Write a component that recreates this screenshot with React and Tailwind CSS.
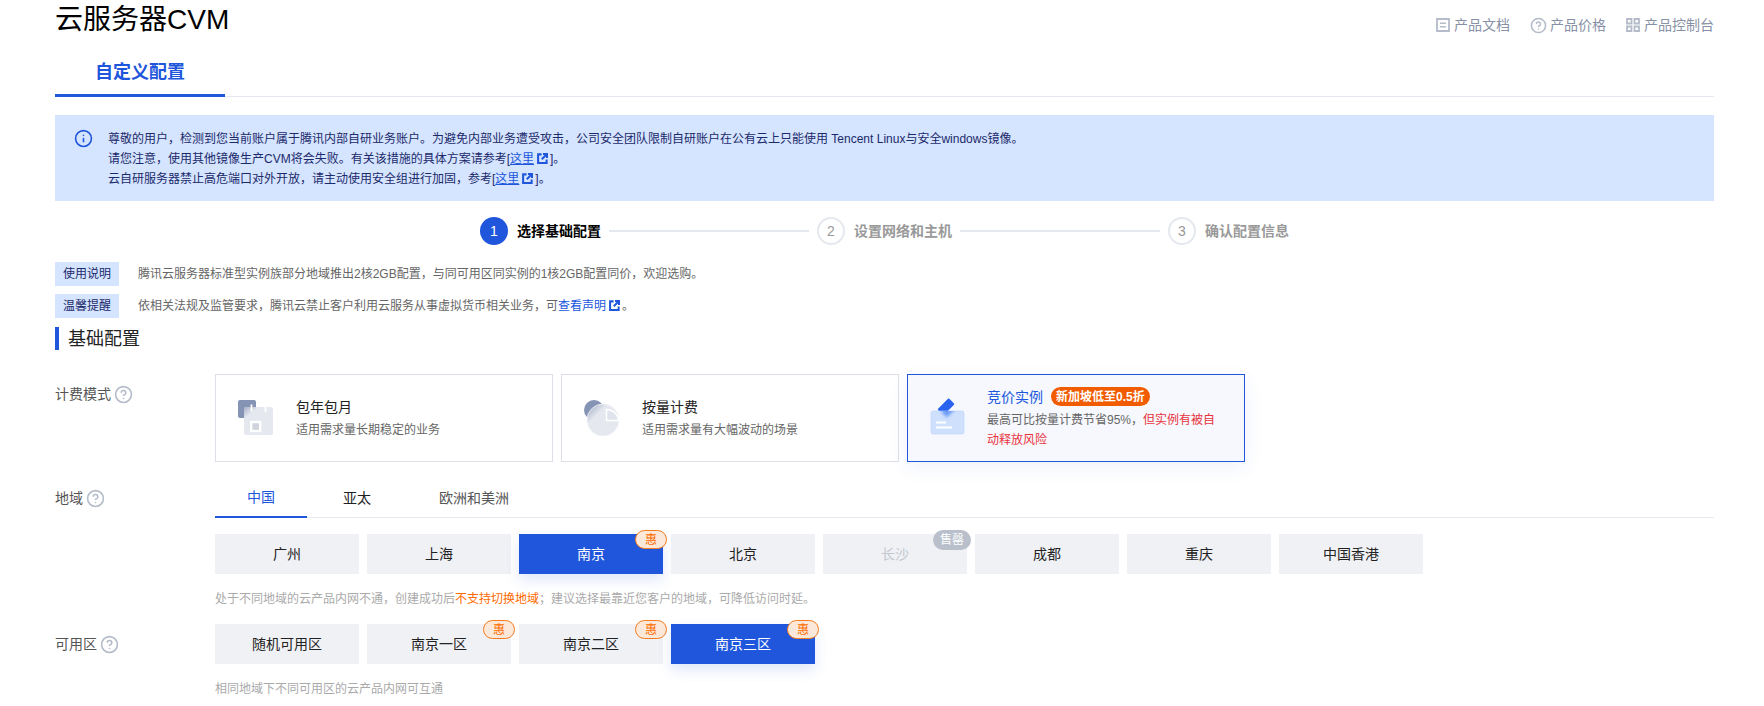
import React from 'react';
import { CircleHelp, Info } from 'lucide-react';

const FONT = 'font-["Liberation_Sans","Noto_Sans_CJK_SC",sans-serif]';

const ExternalIcon = () => (
  <svg viewBox="0 0 12 12" className="inline-block w-[11px] h-[11px] ml-[3px] mr-[2px] align-[-1px]">
    <path d="M5 1.5H1.2v9.3h9.3V7" fill="none" stroke="#2056dc" strokeWidth="2.2" />
    <path d="M6.5 1.1h4.4v4.4M10.6 1.4L5.2 6.8" fill="none" stroke="#2056dc" strokeWidth="2.2" />
  </svg>
);

const DocIcon = () => (
  <svg viewBox="0 0 14 14" className="w-[14px] h-[14px]">
    <path d="M1 1h12v12H1z" fill="none" stroke="#b4bbc9" strokeWidth="1.8" />
    <path d="M4 5.2h6M4 8.8h6" stroke="#b4bbc9" strokeWidth="1.6" />
  </svg>
);

const GridIcon = () => (
  <svg viewBox="0 0 14 14" className="w-[14px] h-[14px]">
    <path d="M1 1h4.5v4.5H1zM8.5 1H13v4.5H8.5zM1 8.5h4.5V13H1zM8.5 8.5H13V13H8.5z" fill="none" stroke="#b4bbc9" strokeWidth="1.8" />
  </svg>
);

const MonthlyIcon = () => (
  <svg viewBox="0 0 36 36" className="w-9 h-9 shrink-0">
    <defs>
      <linearGradient id="m1" x1="0.1" y1="0" x2="0.6" y2="0.6">
        <stop offset="0" stopColor="#aab3c9" />
        <stop offset="1" stopColor="#e5e8ef" />
      </linearGradient>
    </defs>
    <rect x="0" y="0" width="18" height="18" rx="2" fill="#8593b5" />
    <rect x="6" y="7" width="29" height="28" rx="2" fill="#e5e8ef" />
    <path d="M8 7h10v11H6V9a2 2 0 0 1 2-2z" fill="url(#m1)" />
    <path d="M13.5 4.5v7M27.5 7v5" stroke="#fff" strokeWidth="1.8" />
    <rect x="13.2" y="22" width="9" height="9" fill="#cfd4df" stroke="#fff" strokeWidth="2.4" />
  </svg>
);

const UsageIcon = () => (
  <svg viewBox="0 0 36 36" className="w-9 h-9 shrink-0">
    <defs>
      <linearGradient id="u1" x1="0" y1="0" x2="0.55" y2="0.55">
        <stop offset="0.1" stopColor="#a5aec6" />
        <stop offset="0.6" stopColor="#e5e8ef" />
      </linearGradient>
    </defs>
    <circle cx="10" cy="10" r="10" fill="#8593b5" />
    <circle cx="19" cy="20" r="16" fill="url(#u1)" stroke="#f3f4f8" strokeWidth="0.8" />
    <path d="M22.5 9.5v11h12a12 12 0 0 0-12-11z" fill="#dfe3ec" stroke="#fff" strokeWidth="1.5" />
  </svg>
);

const SpotIcon = () => (
  <svg viewBox="0 0 36 36" className="w-9 h-9 shrink-0 overflow-visible">
    <defs>
      <filter id="s1" x="-30%" y="-30%" width="160%" height="160%">
        <feGaussianBlur stdDeviation="1.6" />
      </filter>
      <clipPath id="s2">
        <rect x="1" y="11" width="33" height="23" rx="2" />
      </clipPath>
    </defs>
    <rect x="8" y="2.5" width="16" height="8.5" rx="1" transform="rotate(-45 16 6.7)" fill="#2a63f0" />
    <rect x="1" y="11" width="33" height="23" rx="2" fill="#cfe0fd" stroke="#bcd3fb" strokeWidth="0.6" />
    <g clipPath="url(#s2)">
      <rect x="8" y="2.5" width="16" height="8.5" rx="1" transform="rotate(-45 16 6.7) translate(1 4)" fill="#6f9bf7" filter="url(#s1)" />
    </g>
    <path d="M6 22.5h10M6 27.5h16" stroke="#fff" strokeWidth="1.8" />
  </svg>
);

const billing = [
  { icon: <MonthlyIcon />, title: '包年包月', desc: '适用需求量长期稳定的业务' },
  { icon: <UsageIcon />, title: '按量计费', desc: '适用需求量有大幅波动的场景' },
];

const regions = [
  { name: '广州' },
  { name: '上海' },
  { name: '南京', active: true, hui: true },
  { name: '北京' },
  { name: '长沙', soldOut: true },
  { name: '成都' },
  { name: '重庆' },
  { name: '中国香港' },
];

const zones = [
  { name: '随机可用区' },
  { name: '南京一区', hui: true },
  { name: '南京二区', hui: true },
  { name: '南京三区', active: true, hui: true },
];

const FormRow = ({ label, children }) => (
  <div className="flex">
    <div className="w-[160px] shrink-0 pt-[10px] flex items-center gap-[3px] h-[30px] text-[14px] leading-5 text-[#555]">
      {label}
      <CircleHelp size={19} color="#b4bbc9" />
    </div>
    <div className="flex-1 min-w-0">{children}</div>
  </div>
);

const OptionButton = ({ item }) => {
  let cls = 'bg-[#f0f1f5] text-[#222]';
  if (item.active) cls = 'bg-[#2056dc] text-white shadow-[0_6px_14px_rgba(32,86,220,0.14)]';
  if (item.soldOut) cls = 'bg-[#f0f1f5] text-[#c5c8d0]';
  return (
    <div className={`relative w-[144px] h-10 flex items-center justify-center text-[14px] ${cls}`}>
      {item.name}
      {item.hui && (
        <span className="absolute -top-1 -right-1 w-[32px] h-[19px] flex items-center justify-center rounded-full border border-[#f77b1e] bg-[#fce8d8] text-[12px] text-[#ff6a00]">
          惠
        </span>
      )}
      {item.soldOut && (
        <span className="absolute -top-1 -right-1 w-[38px] h-[20px] flex items-center justify-center rounded-full bg-[#b9c0cc] text-[12px] text-white">
          售罄
        </span>
      )}
    </div>
  );
};

const Step = ({ num, label, active }) => (
  <div className="flex items-center gap-[9px]">
    {active ? (
      <span className="w-7 h-7 rounded-full bg-[#2056dc] text-white text-[14px] flex items-center justify-center">{num}</span>
    ) : (
      <span className="w-7 h-7 rounded-full border-2 border-[#e5e8ef] text-[#999] text-[14px] flex items-center justify-center">{num}</span>
    )}
    <span className={active ? 'text-[14px] font-bold text-black' : 'text-[14px] font-bold text-[#999]'}>{label}</span>
  </div>
);

export default function App() {
  return (
    <div className={`${FONT} h-[706px] overflow-hidden bg-white pl-[55px] pr-[50px] text-[12px] leading-5`}>
      <div className="flex justify-between h-[38px]">
        <h1 className="text-[28px] leading-[40px] text-black">云服务器CVM</h1>
        <div className="flex gap-5 mt-3 h-[26px] items-center text-[14px] text-[#8790a5]">
          <span className="flex items-center gap-1"><DocIcon />产品文档</span>
          <span className="flex items-center gap-[3px]"><CircleHelp size={17} color="#b4bbc9" strokeWidth={2.2} />产品价格</span>
          <span className="flex items-center gap-1"><GridIcon />产品控制台</span>
        </div>
      </div>

      <div className="h-[59px] border-b border-[#e5e8ef]">
        <div className="w-[170px] h-[59px] flex items-center justify-center pt-[12px] border-b-[3px] border-[#2056dc] text-[18px] font-bold text-[#2056dc]">
          自定义配置
        </div>
      </div>

      <div className="mt-[18px] h-[86px] bg-[#d5e4ff] flex gap-[15px] pl-[19px] pt-[14px] text-[#1b2a6b]">
        <Info size={19} color="#2056dc" className="shrink-0" />
        <div>
          <p>尊敬的用户，检测到您当前账户属于腾讯内部自研业务账户。为避免内部业务遭受攻击，公司安全团队限制自研账户在公有云上只能使用 Tencent Linux与安全windows镜像。</p>
          <p>请您注意，使用其他镜像生产CVM将会失败。有关该措施的具体方案请参考[<a className="text-[#2056dc] underline">这里</a><ExternalIcon />]。</p>
          <p>云自研服务器禁止高危端口对外开放，请主动使用安全组进行加固，参考[<a className="text-[#2056dc] underline">这里</a><ExternalIcon />]。</p>
        </div>
      </div>

      <div className="mt-4 h-7 flex items-center justify-center">
        <Step num="1" label="选择基础配置" active />
        <div className="w-[200px] h-0.5 bg-[#e5e8ef] mx-2" />
        <Step num="2" label="设置网络和主机" />
        <div className="w-[200px] h-0.5 bg-[#e5e8ef] mx-2" />
        <Step num="3" label="确认配置信息" />
      </div>

      <div className="mt-[17px] flex flex-col gap-2 text-[#666]">
        <div className="flex items-center gap-[19px]">
          <span className="w-16 h-6 flex items-center justify-center bg-[#d5e4ff] text-[#1b2a6b]">使用说明</span>
          腾讯云服务器标准型实例族部分地域推出2核2GB配置，与同可用区同实例的1核2GB配置同价，欢迎选购。
        </div>
        <div className="flex items-center gap-[19px]">
          <span className="w-16 h-6 flex items-center justify-center bg-[#d5e4ff] text-[#1b2a6b]">温馨提醒</span>
          <span>依相关法规及监管要求，腾讯云禁止客户利用云服务从事虚拟货币相关业务，可<a className="text-[#2056dc]">查看声明</a><ExternalIcon />。</span>
        </div>
      </div>

      <div className="mt-[9px] h-[23px] flex items-center border-l-[4px] border-[#2056dc] pl-[9px] text-[18px] text-[#222]">基础配置</div>

      <div className="mt-6">
        <FormRow label="计费模式">
          <div className="flex gap-2">
            {billing.map((b) => (
              <div key={b.title} className="w-[338px] h-[88px] border border-[#dcdfe8] flex items-center pl-[22px] gap-[22px]">
                {b.icon}
                <div>
                  <div className="text-[14px] text-[#222] leading-[22px]">{b.title}</div>
                  <div className="text-[#666] mt-[2px]">{b.desc}</div>
                </div>
              </div>
            ))}
            <div className="w-[338px] h-[88px] border border-[#2056dc] bg-[#f6f8fd] shadow-[0_6px_18px_rgba(32,86,220,0.08)] flex items-center pl-[22px] gap-[21px]">
              <SpotIcon />
              <div className="w-[230px]">
                <div className="flex items-center gap-[8px] leading-[20px]">
                  <span className="text-[14px] text-[#2056dc]">竞价实例</span>
                  <span className="h-[19px] px-[5px] flex items-center rounded-full bg-[#f25c00] text-white text-[12px] font-bold">新加坡低至0.5折</span>
                </div>
                <div className="text-[#666] leading-[20px] mt-[3px]">
                  最高可比按量计费节省95%，<span className="text-[#e8323c]">但实例有被自</span>
                </div>
                <div className="text-[#e8323c] leading-[20px]">动释放风险</div>
              </div>
            </div>
          </div>
        </FormRow>
      </div>

      <div className="mt-4">
        <FormRow label="地域">
          <div className="flex gap-1 h-10 border-b border-[#e5e8ef] text-[14px]">
            <span className="px-8 h-10 flex items-center border-b-2 border-[#2056dc] text-[#2056dc]">中国</span>
            <span className="px-8 h-10 flex items-center text-[#222]">亚太</span>
            <span className="px-8 h-10 flex items-center text-[#555]">欧洲和美洲</span>
          </div>
          <div className="mt-4 flex gap-2">
            {regions.map((r) => <OptionButton key={r.name} item={r} />)}
          </div>
          <p className="mt-[15px] text-[#aaa]">
            处于不同地域的云产品内网不通，创建成功后<span className="text-[#ff6a00]">不支持切换地域</span>；建议选择最靠近您客户的地域，可降低访问时延。
          </p>
        </FormRow>
      </div>

      <div className="mt-[15px]">
        <FormRow label="可用区">
          <div className="flex gap-2">
            {zones.map((z) => <OptionButton key={z.name} item={z} />)}
          </div>
          <p className="mt-[15px] text-[#aaa]">相同地域下不同可用区的云产品内网可互通</p>
        </FormRow>
      </div>
    </div>
  );
}
